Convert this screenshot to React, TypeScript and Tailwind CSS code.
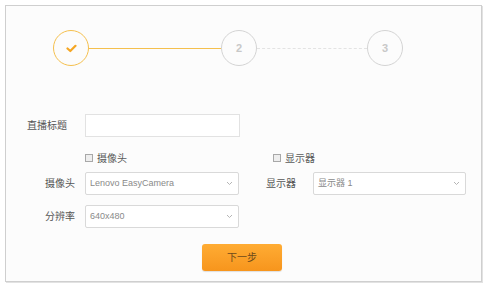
import React from "react";

const font = { fontFamily: '"Liberation Sans", "Noto Sans CJK SC", sans-serif' };

const Chevron = () => (
  <svg width="7" height="5" viewBox="0 0 7 5" className="text-[#b5b5b5]">
    <path d="M1 1 L3.5 3.5 L6 1" fill="none" stroke="currentColor" strokeWidth="1" />
  </svg>
);

const Select = ({ value, width }: { value: string; width: string }) => (
  <div
    className={`${width} h-[23px] flex items-center justify-between pl-[4px] pr-[5px] bg-white border border-[#d9d9d9] rounded-[2px] text-[9px] text-[#8a8a8a]`}
  >
    <span>{value}</span>
    <Chevron />
  </div>
);

const Checkbox = ({ label }: { label: string }) => (
  <div className="flex items-center gap-[4px] text-[10px] text-[#5a5a5a]">
    <span className="w-[8px] h-[8px] border border-[#a8a8a8] bg-[#eeeeee]" />
    <span>{label}</span>
  </div>
);

export default function App() {
  return (
    <div className="w-[485px] h-[286px] bg-white pt-[5px] pl-[5px]" style={font}>
      <div className="w-[477px] h-[277px] border border-[#cfcfcf] bg-[#fcfcfc] shadow-[1px_1px_0_#e2e2e2] flex flex-col">
        {/* stepper */}
        <div className="flex items-center pt-[24px] pl-[47px]">
          <div className="w-[36px] h-[36px] rounded-full border border-[#f5c04e] flex items-center justify-center">
            <svg width="11" height="9" viewBox="0 0 11 9">
              <path d="M1.5 4.5 L4.3 7 L9.5 1.8" fill="none" stroke="#f5a623" strokeWidth="2.2" strokeLinecap="round" strokeLinejoin="round" />
            </svg>
          </div>
          <div className="w-[132px] h-0 border-t border-[#f5c04e]" />
          <div className="w-[36px] h-[36px] rounded-full border border-[#d4d4d4] flex items-center justify-center text-[11px] font-bold text-[#c8c8c8]">
            2
          </div>
          <div className="w-[110px] h-0 border-t border-dashed border-[#e3e3e3]" />
          <div className="w-[36px] h-[36px] rounded-full border border-[#d4d4d4] flex items-center justify-center text-[11px] font-bold text-[#c8c8c8]">
            3
          </div>
        </div>

        {/* title */}
        <div className="flex items-center mt-[48px]">
          <span className="w-[61px] text-right text-[10px] text-[#555]">直播标题</span>
          <div className="ml-[18px] w-[155px] h-[23px] bg-white border border-[#e2e2e2]" />
        </div>

        {/* checkboxes */}
        <div className="flex items-center mt-[15px] h-[12px]">
          <div className="ml-[79px]">
            <Checkbox label="摄像头" />
          </div>
          <div className="ml-[146px]">
            <Checkbox label="显示器" />
          </div>
        </div>

        {/* camera + display */}
        <div className="flex items-center mt-[8px]">
          <span className="w-[69px] text-right text-[10px] text-[#555]">摄像头</span>
          <div className="ml-[10px]">
            <Select value="Lenovo EasyCamera" width="w-[154px]" />
          </div>
          <span className="ml-[27px] text-[10px] text-[#555]">显示器</span>
          <div className="ml-[17px]">
            <Select value="显示器 1" width="w-[153px]" />
          </div>
        </div>

        {/* resolution */}
        <div className="flex items-center mt-[10px]">
          <span className="w-[69px] text-right text-[10px] text-[#555]">分辨率</span>
          <div className="ml-[10px]">
            <Select value="640x480" width="w-[154px]" />
          </div>
        </div>

        {/* next */}
        <div className="flex mt-[16px] pl-[196px]">
          <button className="w-[80px] h-[27px] rounded-[3px] bg-gradient-to-b from-[#ffac33] to-[#f7951c] shadow-[0_1px_1px_rgba(0,0,0,0.12)] text-[10px] text-[#6e4a1a]">
            下一步
          </button>
        </div>
      </div>
    </div>
  );
}
